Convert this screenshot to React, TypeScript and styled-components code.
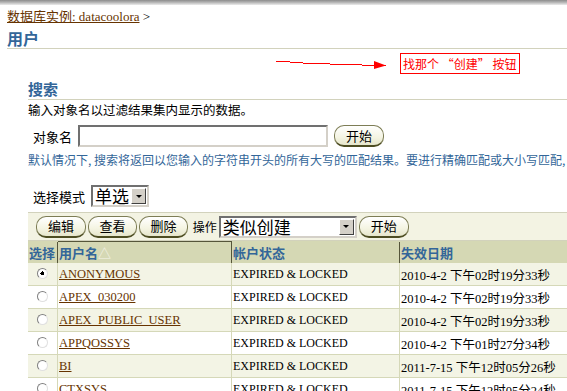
import React from "react";
import styled, { createGlobalStyle } from "styled-components";

const GlobalStyle = createGlobalStyle`
  html, body {
    margin: 0;
    padding: 0;
    background: #ffffff;
    overflow: hidden;
  }
  body {
    font-family: "Liberation Serif", "Noto Sans CJK SC", serif;
    font-size: 13px;
    color: #000;
  }
`;

const users = [
  { name: "ANONYMOUS", date: "2010-4-2 下午02时19分33秒", checked: true },
  { name: "APEX_030200", date: "2010-4-2 下午02时19分33秒" },
  { name: "APEX_PUBLIC_USER", date: "2010-4-2 下午02时19分33秒" },
  { name: "APPQOSSYS", date: "2010-4-2 下午01时27分34秒" },
  { name: "BI", date: "2011-7-15 下午12时05分26秒" },
  { name: "CTXSYS", date: "2011-7-15 下午12时05分24秒" },
];

const Page = styled.div`
  position: relative;
  width: 567px;
  height: 391px;
  overflow: hidden;
`;

const TopShade = styled.div`
  height: 5px;
  background: linear-gradient(#8c8c8c, #b8b8b8 50%, #ececec);
`;

const Header = styled.div`
  padding: 3px 0 0 7px;
`;

const Crumb = styled.div`
  height: 18px;
  line-height: 18px;
  font-size: 13px;
  a {
    color: #663300;
    text-decoration: underline;
  }
`;

const Title = styled.h1`
  margin: 3px 0 0;
  padding-bottom: 1px;
  font-family: "Noto Sans CJK SC", sans-serif;
  font-size: 16px;
  line-height: 18px;
  font-weight: bold;
  color: #336699;
  border-bottom: 1px solid #d2d2bc;
`;

const Content = styled.div`
  padding: 31px 0 0 28px;
  font-family: "Noto Sans CJK SC", sans-serif;
  white-space: nowrap;
`;

const SectionTitle = styled.h2`
  margin: 0;
  font-size: 15px;
  line-height: 18px;
  font-weight: bold;
  color: #336699;
  border-bottom: 1px solid #d2d2bc;
  padding-bottom: 1px;
`;

const Hint = styled.div<{ $blue?: boolean }>`
  font-size: ${(p) => (p.$blue ? "12px" : "12.5px")};
  line-height: 17px;
  color: ${(p) => (p.$blue ? "#336699" : "#000")};
  margin-top: ${(p) => (p.$blue ? "4px" : "1px")};
`;

const FormRow = styled.div<{ $top: number }>`
  display: flex;
  align-items: center;
  gap: 6px;
  margin-top: ${(p) => p.$top}px;
  padding-left: 5px;
`;

const Label = styled.span<{ $small?: boolean }>`
  font-size: ${(p) => (p.$small ? "12px" : "13px")};
`;

const TextInput = styled.div`
  width: 246px;
  height: 18px;
  border: 2px solid;
  border-color: #707070 #d4d0c8 #d4d0c8 #707070;
  background: #fff;
`;

const Button = styled.button<{ $w: number }>`
  width: ${(p) => p.$w}px;
  height: 22px;
  padding: 0;
  font-family: "Noto Sans CJK SC", sans-serif;
  font-size: 13px;
  line-height: 18px;
  color: #000;
  border-radius: 10px;
  border: 1px solid #7d7d55;
  border-bottom: 2px solid #4d4d22;
  background: linear-gradient(#ffffff, #f4f4e2 60%, #e6e6cc);
`;

const Select = styled.div<{ $w: number }>`
  width: ${(p) => p.$w}px;
  height: 18px;
  display: flex;
  align-items: center;
  justify-content: space-between;
  border: 2px solid;
  border-color: #707070 #d4d0c8 #d4d0c8 #707070;
  background: #fff;
  font-size: 17px;
  line-height: 18px;
  padding-left: 2px;
`;

const SelectArrow = styled.span`
  width: 15px;
  height: 16px;
  margin-right: 1px;
  background: #d4d0c8;
  border: 1px solid;
  border-color: #fff #404040 #404040 #fff;
  box-sizing: border-box;
  display: flex;
  align-items: center;
  justify-content: center;
  &::after {
    content: "";
    border-left: 3px solid transparent;
    border-right: 3px solid transparent;
    border-top: 3px solid #000;
  }
`;

const Toolbar = styled.div`
  margin-top: 5px;
  display: flex;
  align-items: center;
  gap: 2px;
  height: 27px;
  padding-left: 8px;
  background: #f3f3e3;
  border-top: 1px solid #d2d2bc;
  border-bottom: 1px solid #d2d2bc;
`;

const Table = styled.table`
  border-collapse: collapse;
  width: 545px;
  table-layout: fixed;
  font-size: 13px;
`;

const Th = styled.th<{ $w?: number; $sorted?: boolean }>`
  width: ${(p) => (p.$w ? `${p.$w}px` : "auto")};
  height: 21px;
  padding: 0 1px;
  text-align: left;
  font-family: "Noto Sans CJK SC", sans-serif;
  font-size: 13px;
  font-weight: bold;
  color: #336699;
  background: #d5d8b4;
  border-left: 1px solid #55553a;
  border-top: 1px solid ${(p) => (p.$sorted ? "#55553a" : "#d5d8b4")};
  &:first-child {
    border-left: none;
  }
`;

const Sort = styled.span`
  color: #f5f5ea;
  font-weight: normal;
`;

const Tr = styled.tr<{ $odd: boolean }>`
  background: ${(p) => (p.$odd ? "#f3f4e5" : "#ffffff")};
`;

const Td = styled.td<{ $center?: boolean; $size?: number }>`
  height: 22px;
  padding: 0 1px;
  border: 1px solid #d5d8b8;
  border-top: none;
  text-align: ${(p) => (p.$center ? "center" : "left")};
  font-family: "Liberation Serif", "Noto Sans CJK SC", serif;
  font-size: ${(p) => p.$size ?? 12}px;
  white-space: nowrap;
  overflow: hidden;
  &:first-child {
    border-left: none;
  }
`;

const Radio = styled.span<{ $on?: boolean }>`
  display: inline-block;
  width: 9px;
  height: 9px;
  border-radius: 50%;
  border: 1px solid;
  border-color: #808080 #e0e0e0 #e0e0e0 #808080;
  background: radial-gradient(
    circle,
    ${(p) => (p.$on ? "#000 0 2px" : "#fff 0 2px")},
    #fff 2px
  );
  vertical-align: -1px;
`;

const UserLink = styled.a`
  color: #663300;
  font-size: 12.5px;
  text-decoration: underline;
`;

const Note = styled.div`
  position: absolute;
  left: 400px;
  top: 53px;
  width: 116px;
  height: 19px;
  border: 1px solid #ff0000;
  color: #ff0000;
  font-family: "Noto Sans CJK SC", sans-serif;
  font-size: 12px;
  line-height: 19px;
  padding-left: 2px;
  white-space: nowrap;
  box-sizing: content-box;
`;

const Arrow = styled.svg`
  position: absolute;
  left: 276px;
  top: 58px;
`;

export default function App() {
  return (
    <Page>
      <GlobalStyle />
      <TopShade />
      <Header>
        <Crumb>
          <a>数据库实例: datacoolora</a> &gt;
        </Crumb>
        <Title>用户</Title>
      </Header>

      <Arrow width="115" height="14" viewBox="0 0 115 14">
        <path
          d="M0 3.5H14M14 4.5H27M27 5.5H54M54 6.5H86M86 7.5H110"
          stroke="#ff0000"
          strokeWidth="1"
          fill="none"
        />
        <path d="M98 3L110 7.5L98 11Z" fill="#ff0000" />
      </Arrow>
      <Note>找那个 “创建” 按钮</Note>

      <Content>
        <SectionTitle>搜索</SectionTitle>
        <Hint>输入对象名以过滤结果集内显示的数据。</Hint>
        <FormRow $top={7}>
          <Label>对象名</Label>
          <TextInput />
          <Button $w={50}>开始</Button>
        </FormRow>
        <Hint $blue>
          默认情况下, 搜索将返回以您输入的字符串开头的所有大写的匹配结果。要进行精确匹配或大小写匹配,
        </Hint>
        <FormRow $top={17}>
          <Label>选择模式</Label>
          <Select $w={52}>
            单选
            <SelectArrow />
          </Select>
        </FormRow>
        <Toolbar>
          <Button $w={50}>编辑</Button>
          <Button $w={49}>查看</Button>
          <Button $w={49}>删除</Button>
          <Label $small>&nbsp;操作</Label>
          <Select $w={132}>
            类似创建
            <SelectArrow />
          </Select>
          <Button $w={50}>开始</Button>
        </Toolbar>
        <Table>
          <thead>
            <tr>
              <Th $w={27}>选择</Th>
              <Th $w={171} $sorted>
                用户名<Sort>△</Sort>
              </Th>
              <Th $w={165}>帐户状态</Th>
              <Th>失效日期</Th>
            </tr>
          </thead>
          <tbody>
            {users.map((u, i) => (
              <Tr key={u.name} $odd={i % 2 === 0}>
                <Td $center>
                  <Radio $on={u.checked} />
                </Td>
                <Td>
                  <UserLink>{u.name}</UserLink>
                </Td>
                <Td>EXPIRED &amp; LOCKED</Td>
                <Td $size={12.5}>{u.date}</Td>
              </Tr>
            ))}
          </tbody>
        </Table>
      </Content>
    </Page>
  );
}
